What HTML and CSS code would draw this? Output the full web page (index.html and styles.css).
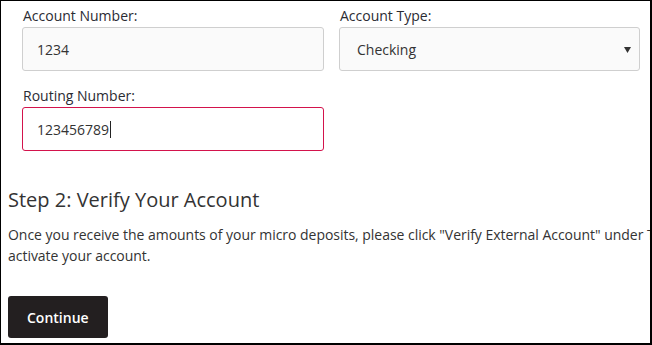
FILE: index.html
```html
<!DOCTYPE html>
<html lang="en">
<head>
<meta charset="utf-8">
<title>Verify Account</title>
<link rel="stylesheet" href="styles.css">
</head>
<body>
<div class="frame">
  <div class="fields">
    <div class="field">
      <label class="label" for="acct">Account Number:</label>
      <input class="input" id="acct" type="text" value="1234">
    </div>
    <div class="field">
      <label class="label" for="type">Account Type:</label>
      <div class="select-wrap">
        <select class="input select" id="type">
          <option>Checking</option>
          <option>Savings</option>
        </select>
        <svg class="select-arrow" width="7" height="6" viewBox="0 0 7 6"><path d="M0 0H7L3.5 6Z" fill="#333"/></svg>
      </div>
    </div>
    <div class="field">
      <label class="label">Routing Number:</label>
      <div class="input focused"><span>123456789</span><span class="caret"></span></div>
    </div>
  </div>
  <h2 class="heading">Step 2: Verify Your Account</h2>
  <p class="text">Once you receive the amounts of your micro deposits, please click "Verify External Account" under Transfers to<br>activate your account.</p>
  <button class="btn" type="button">Continue</button>
</div>
</body>
</html>
```
FILE: styles.css
```css
* { box-sizing: border-box; }
html, body { margin: 0; padding: 0; background: #fff; }
body { font-family: "Open Sans", "Liberation Sans", sans-serif; color: #333; }
.frame {
  width: 652px;
  height: 345px;
  border-style: solid;
  border-color: #000;
  border-width: 1px 2px 2px 1px;
  padding: 5px 0 0 7px;
  overflow: hidden;
}
.fields {
  display: grid;
  grid-template-columns: 302px 301px;
  column-gap: 15px;
  row-gap: 15px;
  margin-left: 14px;
}
.field { display: flex; flex-direction: column; }
.label {
  font-size: 14px;
  line-height: 20px;
  margin: 0 0 1px 1px;
  color: #2b2b33;
}
.input {
  height: 44px;
  width: 100%;
  border: 1px solid #cfcfcf;
  border-radius: 3px;
  background: #fafafa;
  padding: 0 14px;
  font-family: "Open Sans", "Liberation Sans", sans-serif;
  font-size: 14px;
  color: #333;
  outline: none;
  margin: 0;
}
.select-wrap { position: relative; }
.select {
  appearance: none;
  -webkit-appearance: none;
  padding-left: 17px;
}
.select-arrow {
  position: absolute;
  right: 9px;
  top: 20px;
}
.focused {
  display: flex;
  align-items: center;
  background: #fff;
  border-color: #d3134c;
}
.caret {
  display: inline-block;
  width: 1px;
  height: 17px;
  background: #222;
  margin-left: 1px;
}
.heading {
  font-size: 20px;
  font-weight: 400;
  line-height: 28px;
  margin: 35px 0 10px 0;
  color: #333;
}
.text {
  font-size: 14px;
  line-height: 21px;
  margin: 0 0 30px 0;
  width: 760px;
  white-space: nowrap;
  letter-spacing: -0.03px;
}
.btn {
  display: block;
  height: 42px;
  padding: 0 19px;
  background: #231f20;
  color: #fff;
  border: none;
  border-radius: 3px;
  font-family: "Open Sans", "Liberation Sans", sans-serif;
  font-size: 14px;
  font-weight: 600;
  cursor: pointer;
}
```
